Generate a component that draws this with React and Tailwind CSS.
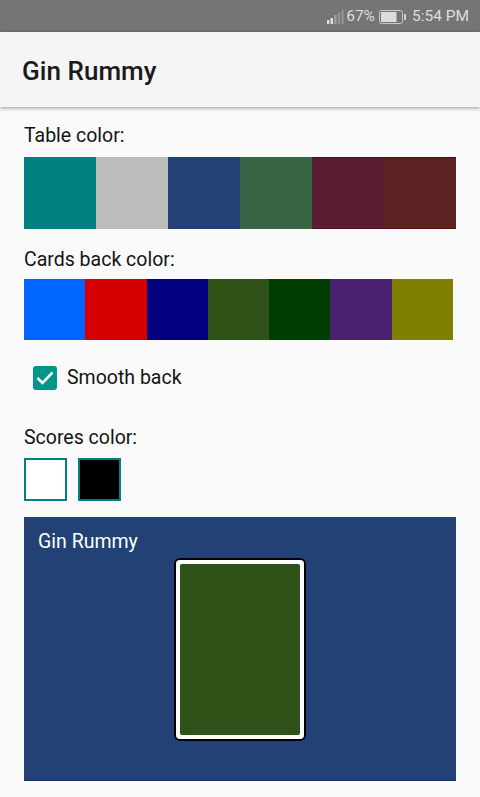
import React from "react";

const tableColors = [
  ["bg-[#008080]", "border-[#008080]"],
  ["bg-[#bdbdbd]", "border-[#bdbdbd]"],
  ["bg-[#224174]", "border-[#1d3d75]"],
  ["bg-[#386644]", "border-[#386644]"],
  ["bg-[#5a1d33]", "border-[#560a2a]"],
  ["bg-[#5c2222]", "border-[#5a0a0a]"],
];
const backColors = ["bg-[#0066ff]", "bg-[#d60000]", "bg-[#000080]", "bg-[#2e5217]", "bg-[#003d00]", "bg-[#4a2072]", "bg-[#808000]"];

function SignalIcon() {
  return (
    <svg width="17" height="14" viewBox="0 0 17 14" className="shrink-0">
      <rect x="0" y="10" width="2.4" height="4" fill="#e0e0e0" />
      <rect x="3.6" y="8" width="2.4" height="6" fill="#e0e0e0" />
      <rect x="7.2" y="5" width="2.4" height="9" fill="#a0a0a0" />
      <rect x="10.8" y="2.5" width="2.4" height="11.5" fill="#939393" />
      <rect x="14.4" y="0" width="2.4" height="14" fill="#939393" />
    </svg>
  );
}

function BatteryIcon() {
  return (
    <svg width="27" height="14" viewBox="0 0 27 14" className="shrink-0">
      <rect x="0.5" y="0.5" width="23" height="13" rx="2" fill="none" stroke="#c8c8c8" strokeWidth="1" />
      <rect x="2" y="2" width="15.5" height="10" fill="#dcdcdc" />
      <rect x="25" y="4" width="2" height="6" fill="#d0d0d0" />
    </svg>
  );
}

export default function App() {
  return (
    <div className="w-[480px] h-[797px] overflow-hidden bg-[#fafafa] text-[#141414] font-['Roboto',sans-serif]">
      <div className="h-8 bg-[#757575] flex items-center justify-end pr-[11px] pt-[2px] text-[#dedede] text-[15.5px]">
        <SignalIcon />
        <span className="ml-[2px]">67%</span>
        <span className="ml-[4px]"><BatteryIcon /></span>
        <span className="ml-[6px]">5:54 PM</span>
      </div>
      <div className="h-[75px] bg-[#f5f5f5] flex items-center pl-[22px] pt-[3px] shadow-[0_1px_4px_rgba(0,0,0,0.4)] relative">
        <h1 className="text-[26px] font-medium text-[#1a1a1a] tracking-[0.05px]">Gin Rummy</h1>
      </div>
      <div className="px-6">
        <p className="text-[19.5px] mt-[23px] mb-[16px] h-[11px] flex items-center">Table color:</p>
        <div className="flex w-[432px] h-[72px]">
          {tableColors.map(([bg, border]) => (
            <div key={bg} className={`w-[72px] border-y ${bg} ${border}`} />
          ))}
        </div>
        <p className="text-[19.5px] h-[11px] flex items-center mt-[25px] mb-[14px]">Cards back color:</p>
        <div className="flex w-[429px] h-[61px]">
          {backColors.map((c) => (
            <div key={c} className={`flex-1 ${c}`} />
          ))}
        </div>
        <div className="flex items-center h-6 ml-[9px] mt-[26px]">
          <div className="w-6 h-6 rounded-[3px] bg-[#009688] flex items-center justify-center">
            <svg width="20" height="20" viewBox="0 0 20 20" fill="none">
              <path d="M2.5 10 L7.5 15 L17.5 4.5" stroke="#ffffff" strokeWidth="2.6" />
            </svg>
          </div>
          <span className="ml-[10px] text-[19.5px] leading-6">Smooth back</span>
        </div>
        <p className="text-[19.5px] h-[11px] flex items-center mt-[42px] mb-[15px]">Scores color:</p>
        <div className="flex gap-[11px]">
          <div className="w-[43px] h-[43px] bg-white border-2 border-[#008080]" />
          <div className="w-[43px] h-[43px] bg-black border-2 border-[#008080]" />
        </div>
        <div className="mt-4 w-[432px] h-[264px] bg-[#224174] border-b border-[#0f3068] relative">
          <p className="absolute left-[14px] top-[10px] text-[19.5px] text-white">Gin Rummy</p>
          <div className="absolute left-[150px] top-[41px] w-[132px] h-[183px] bg-white border-2 border-black rounded-[6px] p-[4px]">
            <div className="w-full h-full bg-[#2e5217] rounded-[2px]" />
          </div>
        </div>
      </div>
    </div>
  );
}
